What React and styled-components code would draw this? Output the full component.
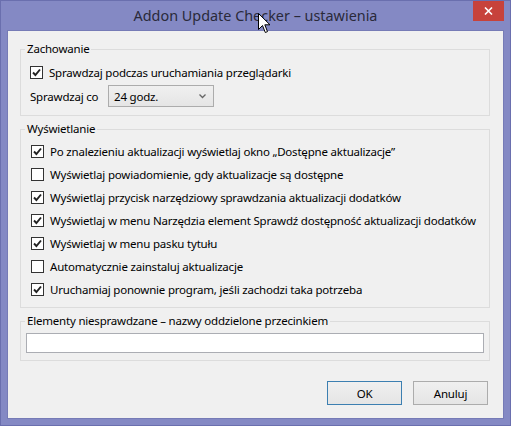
import React from "react";
import styled, { createGlobalStyle } from "styled-components";

const Global = createGlobalStyle`
  html, body { margin: 0; padding: 0; background: #8489c4; }
  body { font-family: "Noto Sans", "Open Sans", sans-serif; }
  * { box-sizing: border-box; }
`;

const Window = styled.div`
  position: relative;
  width: 511px;
  height: 426px;
  background: #8489c4;
  border: 1px solid #6a6fae;
  display: flex;
  flex-direction: column;
  font-family: "Noto Sans", sans-serif;
  font-size: 11.5px;
  letter-spacing: -0.2px;
  color: #000;
`;

const TitleBar = styled.div`
  height: 29px;
  display: grid;
  grid-template-columns: 1fr auto 1fr;
  align-items: start;
`;

const Title = styled.div`
  grid-column: 2;
  font-size: 14.4px;
  letter-spacing: 0;
  line-height: 30px;
  color: #2a2a3a;
  white-space: nowrap;
`;

const CloseButton = styled.div`
  grid-column: 3;
  justify-self: end;
  width: 31px;
  height: 20px;
  margin-right: 6px;
  background: #c7423b;
  display: flex;
  align-items: center;
  justify-content: center;
`;

const Client = styled.div`
  flex: 1;
  margin: 0 6px 6px 6px;
  border: 1px solid #767bb6;
  background: #f0f0f0;
  padding: 10px 13px 0 12px;
  display: flex;
  flex-direction: column;
`;

const Group = styled.fieldset`
  margin: 0 0 5px 0;
  padding: 0;
  border: 1px solid #dcdcdc;
  min-width: 0;
`;

const Legend = styled.legend`
  margin-left: 4px;
  padding: 0 2px;
  line-height: 16px;
`;

const GroupBody = styled.div`
  padding: ${(p) => p.$pad};
  display: flex;
  flex-direction: column;
  gap: ${(p) => p.$gap || 0}px;
`;

const Row = styled.label`
  display: flex;
  align-items: center;
  height: ${(p) => p.$h || 23}px;
  white-space: nowrap;
`;

const Box = styled.span`
  width: 13px;
  height: 13px;
  border: 1px solid #333;
  background: #fff;
  margin-right: 6px;
  display: flex;
  align-items: center;
  justify-content: center;
  flex: none;
`;

const FieldLabel = styled.span`
  width: 78px;
  flex: none;
`;

const Select = styled.div`
  width: 106px;
  height: 22px;
  border: 1px solid #acacac;
  background: linear-gradient(#f0f0f0, #e5e5e5);
  display: flex;
  align-items: center;
  justify-content: space-between;
  padding: 0 7px 0 5px;
`;

const TextInput = styled.div`
  height: 20px;
  background: #fff;
  border: 1px solid #abadb3;
`;

const ButtonRow = styled.div`
  margin-top: 15px;
  display: flex;
  justify-content: flex-end;
  gap: 11px;
  padding-right: 2px;
`;

const Button = styled.div`
  width: 75px;
  height: 24px;
  border: 1px solid ${(p) => (p.$default ? "#3c7fb1" : "#acacac")};
  background: linear-gradient(#f0f0f0, #e5e5e5);
  display: flex;
  align-items: center;
  justify-content: center;
`;

const Cursor = styled.svg`
  position: absolute;
  left: 257px;
  top: 12px;
`;

const Check = () => (
  <svg width="9" height="9" viewBox="0 0 9 9">
    <path d="M1 4.5 L3.4 7 L8 1.5" fill="none" stroke="#222" strokeWidth="1.9" />
  </svg>
);

const CheckRow = ({ checked, children, h }) => (
  <Row $h={h}>
    <Box>{checked && <Check />}</Box>
    <span>{children}</span>
  </Row>
);

export default function App() {
  return (
    <>
      <Global />
      <Window>
        <TitleBar>
          <Title>Addon Update Checker – ustawienia</Title>
          <CloseButton>
            <svg width="9" height="8" viewBox="0 0 9 8">
              <path d="M1 0.5 L8 7.5 M8 0.5 L1 7.5" stroke="#fff" strokeWidth="1.6" />
            </svg>
          </CloseButton>
        </TitleBar>
        <Client>
          <Group>
            <Legend>Zachowanie</Legend>
            <GroupBody $pad="5px 0 8px 9px" $gap={3}>
              <CheckRow checked h={20}>Sprawdzaj podczas uruchamiania przeglądarki</CheckRow>
              <Row $h={22}>
                <FieldLabel>Sprawdzaj co</FieldLabel>
                <Select>
                  <span>24 godz.</span>
                  <svg width="7" height="5" viewBox="0 0 7 5">
                    <path d="M0.5 0.5 L3.5 3.5 L6.5 0.5" fill="none" stroke="#666" strokeWidth="1.3" />
                  </svg>
                </Select>
              </Row>
            </GroupBody>
          </Group>
          <Group>
            <Legend>Wyświetlanie</Legend>
            <GroupBody $pad="3px 0 6px 10px">
              <CheckRow checked>Po znalezieniu aktualizacji wyświetlaj okno „Dostępne aktualizacje”</CheckRow>
              <CheckRow>Wyświetlaj powiadomienie, gdy aktualizacje są dostępne</CheckRow>
              <CheckRow checked>Wyświetlaj przycisk narzędziowy sprawdzania aktualizacji dodatków</CheckRow>
              <CheckRow checked>Wyświetlaj w menu Narzędzia element Sprawdź dostępność aktualizacji dodatków</CheckRow>
              <CheckRow checked>Wyświetlaj w menu pasku tytułu</CheckRow>
              <CheckRow>Automatycznie zainstaluj aktualizacje</CheckRow>
              <CheckRow checked>Uruchamiaj ponownie program, jeśli zachodzi taka potrzeba</CheckRow>
            </GroupBody>
          </Group>
          <Group>
            <Legend>Elementy niesprawdzane – nazwy oddzielone przecinkiem</Legend>
            <GroupBody $pad="4px 5px 7px 5px">
              <TextInput />
            </GroupBody>
          </Group>
          <ButtonRow>
            <Button $default>OK</Button>
            <Button>Anuluj</Button>
          </ButtonRow>
        </Client>
        <Cursor width="13" height="21" viewBox="0 0 13 21">
          <path d="M0.5 0.5 L0.5 16.5 L4.5 12.5 L7.3 19.5 L9.5 18.6 L6.8 11.8 L12 11.8 Z" fill="#fff" stroke="#000" strokeWidth="1" />
        </Cursor>
      </Window>
    </>
  );
}
